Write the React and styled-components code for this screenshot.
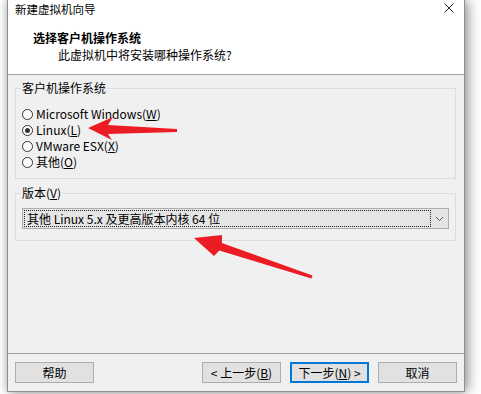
import styled, { createGlobalStyle } from "styled-components";

const GlobalStyle = createGlobalStyle`
  html, body {
    margin: 0;
    padding: 0;
    background: #ffffff;
  }
  body {
    font-family: "Noto Sans CJK SC", "Noto Sans", sans-serif;
    font-size: 12px;
    color: #000;
  }
`;

const Page = styled.div`
  position: relative;
  width: 481px;
  height: 394px;
  overflow: hidden;
`;

const Window = styled.div`
  margin-left: 7px;
  width: 456px;
  height: 391px;
  border: 1px solid #8f8f8f;
  border-top: none;
  background: #f0f0f0;
  box-shadow: 3px 0 12px rgba(0, 0, 0, 0.42), -1px 0 6px rgba(0, 0, 0, 0.12);
  display: flex;
  flex-direction: column;
`;

const Top = styled.div`
  background: #fff;
  height: 74px;
  border-bottom: 1px solid #a0a0a0;
`;

const TitleBar = styled.div`
  height: 18px;
  display: flex;
  align-items: center;
  justify-content: space-between;
  padding: 0 10px 0 7px;
  font-size: 11.5px;
  line-height: 16px;
`;

const Close = styled.svg`
  width: 10px;
  height: 10px;
  margin-top: -2px;
`;

const Header = styled.div`
  padding: 12px 0 0 25px;
`;

const HeadTitle = styled.div`
  font-weight: bold;
  line-height: 16px;
`;

const HeadSub = styled.div`
  margin-top: 1px;
  padding-left: 25px;
  line-height: 16px;
`;

const Body = styled.div`
  height: 279px;
  padding: 5px 8px 0 7px;
  box-sizing: border-box;
  border-bottom: 1px solid #a0a0a0;
`;

const Group = styled.fieldset`
  margin: ${(p) => p.$top || 0}px 0 0 0;
  padding: ${(p) => p.$pad};
  border: 1px solid #dcdcdc;
  min-width: 0;
`;

const Legend = styled.legend`
  padding: 0 1px;
  margin-left: -1px;
  line-height: 16px;
`;

const RadioRow = styled.label`
  display: flex;
  align-items: center;
  height: 16px;
  line-height: 16px;
`;

const RadioDot = styled.span`
  width: 11px;
  height: 11px;
  border: 1px solid #333;
  border-radius: 50%;
  background: #fff;
  margin-right: 3px;
  box-sizing: border-box;
  display: flex;
  align-items: center;
  justify-content: center;

  &::after {
    content: "";
    width: 5px;
    height: 5px;
    border-radius: 50%;
    background: ${(p) => (p.$on ? "#333" : "transparent")};
  }
`;

const Key = styled.span`
  text-decoration: underline;
`;

const Select = styled.div`
  height: 21px;
  box-sizing: border-box;
  border: 1px solid #adadad;
  background: #e5e5e5;
  display: flex;
  align-items: center;
`;

const SelectText = styled.div`
  flex: 1;
  height: 17px;
  margin-left: 1px;
  border: 1px dotted #222;
  box-sizing: border-box;
  padding-left: 2px;
  line-height: 15px;
  white-space: nowrap;
`;

const Chevron = styled.svg`
  width: 17px;
  height: 19px;
`;

const Footer = styled.div`
  flex: 1;
  display: flex;
  justify-content: space-between;
  padding: 8px 7px 0 7px;
`;

const ButtonGroup = styled.div`
  display: flex;
  gap: 9px;
`;

const Button = styled.button`
  width: 79px;
  height: 21px;
  box-sizing: border-box;
  background: #e1e1e1;
  border: 1px solid ${(p) => (p.$primary ? "#0078d7" : "#adadad")};
  box-shadow: ${(p) => (p.$primary ? "inset 0 0 0 1px #0078d7" : "none")};
  font-family: inherit;
  font-size: 12px;
  color: #000;
  padding: 0;
  line-height: 17px;
`;

const Overlay = styled.svg`
  position: absolute;
  left: 0;
  top: 0;
  pointer-events: none;
`;

const options = [
  { name: "Microsoft Windows", key: "W" },
  { name: "Linux", key: "L", on: true },
  { name: "VMware ESX", key: "X" },
  { name: "其他", key: "O" },
];

export default function App() {
  return (
    <Page>
      <GlobalStyle />
      <Window>
        <Top>
          <TitleBar>
            <span>新建虚拟机向导</span>
            <Close viewBox="0 0 10 10">
              <path d="M0.5 0.5 L9.5 9.5 M9.5 0.5 L0.5 9.5" stroke="#222" strokeWidth="1" />
            </Close>
          </TitleBar>
          <Header>
            <HeadTitle>选择客户机操作系统</HeadTitle>
            <HeadSub>此虚拟机中将安装哪种操作系统?</HeadSub>
          </Header>
        </Top>
        <Body>
          <Group $pad="10px 6px 8px 6px">
            <Legend>客户机操作系统</Legend>
            {options.map((o) => (
              <RadioRow key={o.key}>
                <RadioDot $on={o.on} />
                {o.name}(<Key>{o.key}</Key>)
              </RadioRow>
            ))}
          </Group>
          <Group $top={6} $pad="7px 6px 11px 6px">
            <Legend>
              版本(<Key>V</Key>)
            </Legend>
            <Select>
              <SelectText>其他 Linux 5.x 及更高版本内核 64 位</SelectText>
              <Chevron viewBox="0 0 17 19">
                <path d="M5 8 L8.5 11.5 L12 8" fill="none" stroke="#555" strokeWidth="1" />
              </Chevron>
            </Select>
          </Group>
        </Body>
        <Footer>
          <Button>帮助</Button>
          <ButtonGroup>
            <Button>
              &lt; 上一步(<Key>B</Key>)
            </Button>
            <Button $primary>
              下一步(<Key>N</Key>) &gt;
            </Button>
            <Button>取消</Button>
          </ButtonGroup>
        </Footer>
      </Window>
      <Overlay width="481" height="394" viewBox="0 0 481 394">
        <polygon
          points="88,128 113,117 108,125 177,129 177,132 108,134 112,140"
          fill="#ec1c24"
        />
        <polygon
          points="194,238 222,235 221.9,243 312.5,275.6 311.5,278.4 219.3,250.6 214,256"
          fill="#ec1c24"
        />
      </Overlay>
    </Page>
  );
}
